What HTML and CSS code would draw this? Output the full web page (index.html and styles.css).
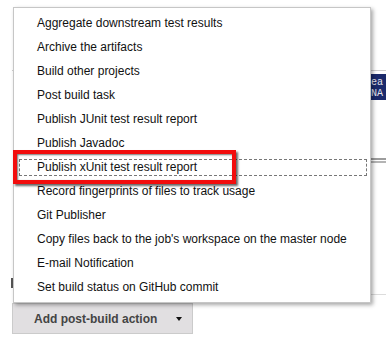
FILE: index.html
```html
<!DOCTYPE html>
<html>
<head>
<meta charset="utf-8">
<link rel="stylesheet" href="styles.css">
</head>
<body>
<div class="page">
  <div class="bg">
    <div class="rule-top"></div>
    <pre class="code">Sea
$NA</pre>
    <div class="dbl"></div>
    <div class="left-mark"></div>
    <div class="bottom-line"></div>
    <button class="add-btn"><span>Add post-build action</span><span class="caret"></span></button>
  </div>
  <ul class="menu">
    <li>Aggregate downstream test results</li>
    <li>Archive the artifacts</li>
    <li>Build other projects</li>
    <li>Post build task</li>
    <li>Publish JUnit test result report</li>
    <li>Publish Javadoc</li>
    <li class="focused">Publish xUnit test result report<span class="mark"></span></li>
    <li>Record fingerprints of files to track usage</li>
    <li>Git Publisher</li>
    <li>Copy files back to the job's workspace on the master node</li>
    <li>E-mail Notification</li>
    <li>Set build status on GitHub commit</li>
  </ul>
</div>
</body>
</html>
```

FILE: styles.css
```css
html, body {
  margin: 0;
  padding: 0;
  background: #fff;
}
.page {
  position: relative;
  width: 386px;
  height: 345px;
  overflow: hidden;
  font-family: "Liberation Sans", Arial, sans-serif;
}
.bg {
  padding-top: 70px;
  display: flex;
  flex-direction: column;
}
.rule-top {
  margin-left: 12px;
  border-top: 1px solid #cfcfcf;
}
.code {
  margin: 3px 0 0 362px;
  padding: 3px 0 0 3px;
  height: 26px;
  box-sizing: border-box;
  background: #1b2a6b;
  color: #e6e6ee;
  font-family: "Liberation Mono", "Courier New", monospace;
  font-size: 10px;
  line-height: 11px;
  white-space: pre;
  overflow: hidden;
}
.dbl {
  margin: 58px 0 0 371px;
  height: 1px;
  border-top: 2px solid #9c9c9c;
  border-bottom: 2px solid #b4b4b4;
}
.left-mark {
  margin: 115px 0 0 11px;
  width: 2px;
  height: 10px;
  background: #555;
}
.bottom-line {
  margin: 6px 0 0 370px;
  border-top: 1px solid #dcdcdc;
}
.add-btn {
  margin: 8px 0 0 12px;
  width: 181px;
  height: 31px;
  box-sizing: border-box;
  border: 1px solid #cbcbcb;
  background: #e1dfe1;
  padding: 0 0 0 21px;
  display: flex;
  align-items: center;
  font-family: "Liberation Sans", Arial, sans-serif;
  font-size: 12px;
  font-weight: bold;
  color: #444;
  text-align: left;
}
.caret {
  margin-left: 19px;
  width: 0;
  height: 0;
  border-left: 3.5px solid transparent;
  border-right: 3.5px solid transparent;
  border-top: 4px solid #111;
}
.menu {
  position: absolute;
  left: 13px;
  top: 7px;
  width: 358px;
  box-sizing: border-box;
  margin: 0;
  padding: 3px 0;
  list-style: none;
  background: #fff;
  border: 1px solid #c6c6c6;
  box-shadow: 2px 2px 4px rgba(0, 0, 0, 0.35);
}
.menu li {
  position: relative;
  height: 24px;
  line-height: 24px;
  padding-left: 23px;
  font-size: 12px;
  color: #111;
  white-space: nowrap;
}
.menu li.focused::before {
  content: "";
  position: absolute;
  top: 4px;
  bottom: 3px;
  left: 5px;
  right: 3px;
  border: 1px dashed #777;
}
.mark {
  position: absolute;
  left: -1px;
  top: -5px;
  width: 223px;
  height: 34px;
  box-sizing: border-box;
  border: 4px solid #f20d0d;
  box-shadow: 2px 2px 2px rgba(0, 0, 0, 0.6), inset 1px 1px 2px rgba(0, 0, 0, 0.55);
}
```
